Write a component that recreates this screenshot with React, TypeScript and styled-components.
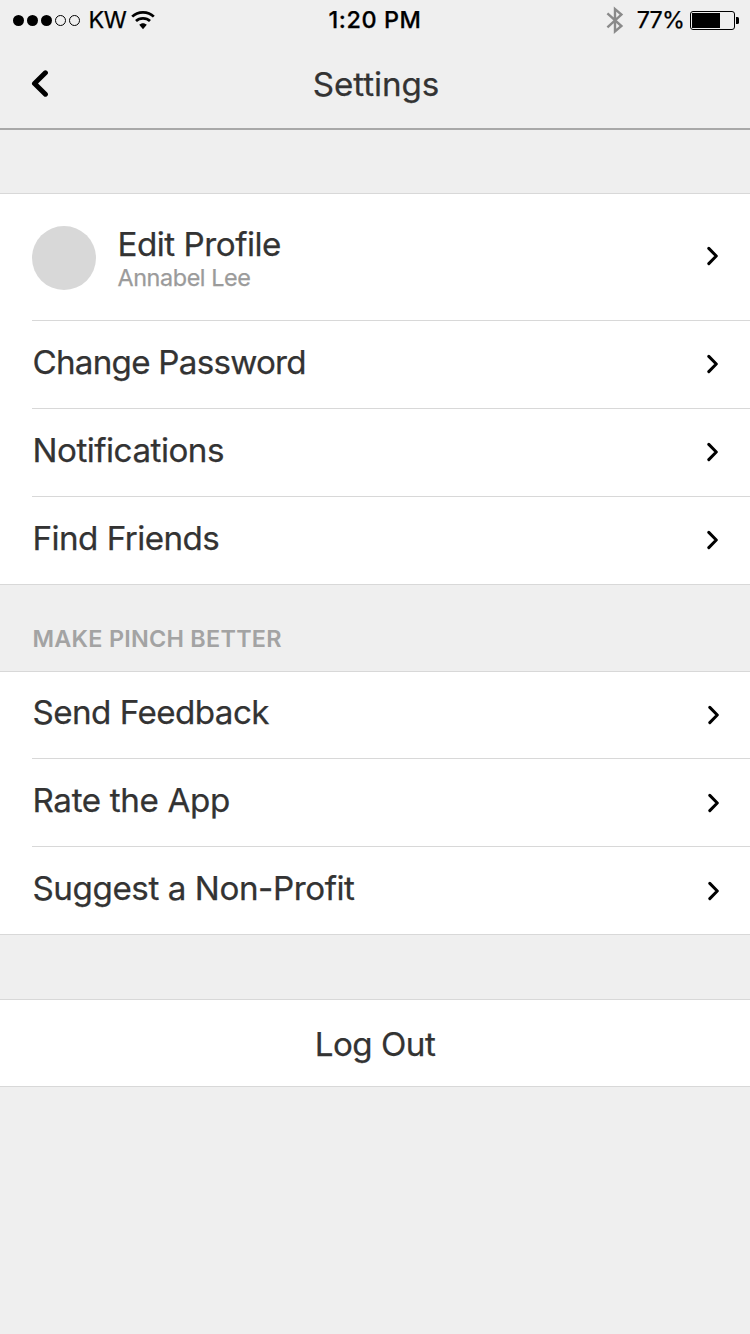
import React from 'react';
import styled, { createGlobalStyle } from 'styled-components';

const GlobalStyle = createGlobalStyle`
  * { box-sizing: border-box; }
  body {
    margin: 0;
    background: #efefef;
    font-family: Inter, 'Liberation Sans', sans-serif;
    color: #333333;
    -webkit-text-stroke: 0.25px currentColor;
  }
`;

const Screen = styled.main`
  display: flex;
  flex-direction: column;
  width: 750px;
  min-height: 1334px;
  background: #efefef;
`;

const StatusBar = styled.div`
  display: grid;
  grid-template-columns: 1fr auto 1fr;
  height: 40px;
  padding: 0 11px 0 13px;
  color: #000;
  font-size: 23.4px;
  line-height: 40px;
  white-space: nowrap;
`;

const StatusSide = styled.div<{ $end?: boolean }>`
  display: flex;
  align-items: center;
  justify-content: ${(p) => (p.$end ? 'flex-end' : 'flex-start')};
`;

const StatusText = styled.span<{ $tracking?: number; $weight?: number }>`
  font-weight: ${(p) => p.$weight ?? 400};
  letter-spacing: ${(p) => p.$tracking ?? 0}px;
`;

const Carrier = styled(StatusText)`
  margin: 0 5px 0 7.5px;
`;

const Time = styled(StatusText)`
  padding-right: 2px;
`;

const Percent = styled(StatusText)`
  margin: 0 6px 0 12.5px;
`;

const NavBar = styled.header`
  display: grid;
  grid-template-columns: 80px 1fr 80px;
  height: 90px;
  border-bottom: 2px solid #a8a8a8;
`;

const BackButton = styled.button`
  display: flex;
  align-items: flex-start;
  padding: 29px 0 0 31px;
  border: 0;
  background: none;
`;

const Title = styled.h1<{ $tracking: number }>`
  margin: 24px 0 0;
  padding-left: 2px;
  font-size: 33.2px;
  font-weight: 400;
  line-height: 40px;
  text-align: center;
  letter-spacing: ${(p) => p.$tracking}px;
`;

const Group = styled.section<{ $gap?: number }>`
  margin-top: ${(p) => p.$gap ?? 0}px;
  border-top: 1px solid #d8d8d8;
  border-bottom: 1px solid #d8d8d8;
  background: #fff;
`;

const Row = styled.div<{ $height: number }>`
  display: flex;
  align-items: flex-end;
  justify-content: space-between;
  height: ${(p) => p.$height}px;
  margin-left: 32px;
  & + & { border-top: 1px solid #d8d8d8; }
`;

const Label = styled.span<{ $tracking: number }>`
  font-size: 33.2px;
  line-height: 40px;
  white-space: nowrap;
  letter-spacing: ${(p) => p.$tracking}px;
`;

const RowLabel = styled(Label)`
  margin: 0 0 26px 0.5px;
`;

const Profile = styled.div`
  display: flex;
  align-items: center;
  gap: 21.5px;
  margin-bottom: 28px;
`;

const Avatar = styled.div`
  width: 64px;
  height: 64px;
  border-radius: 50%;
  background: #d8d8d8;
`;

const ProfileText = styled.div`
  display: flex;
  flex-direction: column;
`;

const ProfileName = styled.span<{ $tracking: number }>`
  color: #9b9b9b;
  font-size: 23.4px;
  line-height: 28px;
  letter-spacing: ${(p) => p.$tracking}px;
`;

const ChevronBox = styled.span<{ $bottom: number; $right: number }>`
  display: flex;
  margin: 0 ${(p) => p.$right}px ${(p) => p.$bottom}px 0;
`;

const SectionTitle = styled.h2<{ $tracking: number }>`
  height: 86px;
  margin: 0;
  padding: 40px 0 0 32.5px;
  color: #a3a3a3;
  font-size: 23.4px;
  font-weight: 600;
  line-height: 28px;
  letter-spacing: ${(p) => p.$tracking}px;
  -webkit-text-stroke: 0;
`;

const LogOut = styled.button`
  display: block;
  width: 100%;
  height: 86px;
  padding: 2px 0 0;
  border: 0;
  background: none;
  color: inherit;
  font-family: inherit;
`;

const Chevron = ({ bottom = 34, right = 31 }: { bottom?: number; right?: number }) => (
  <ChevronBox $bottom={bottom} $right={right}>
    <svg width="12" height="20" viewBox="0 0 12 20" fill="none" stroke="#000" strokeWidth="3" strokeLinecap="round" strokeLinejoin="round">
      <path d="M1.8 2.4 9.3 10 1.8 17.6" />
    </svg>
  </ChevronBox>
);

const Signal = () => (
  <svg width="68" height="12" viewBox="0 0 68 12">
    {[0, 1, 2].map((i) => <circle key={i} cx={5.5 + i * 14} cy="6.5" r="5.5" />)}
    {[3, 4].map((i) => <circle key={i} cx={5.5 + i * 14} cy="6.5" r="5" fill="none" stroke="#000" />)}
  </svg>
);

const Wifi = () => (
  <svg width="24" height="20" viewBox="0 0 24 20" fill="none" stroke="#000" strokeWidth="2.7">
    <path d="M1.2 6.6C6.8 .9 17.2 .9 22.8 6.6M5 11C8.7 7.4 15.3 7.4 19 11" />
    <path d="M8.2 14.7C10.3 12.6 13.7 12.6 15.8 14.7L12 19.2Z" fill="#000" stroke="none" />
  </svg>
);

const Bluetooth = () => (
  <svg width="18" height="28" viewBox="0 0 18 28" fill="none" stroke="#8a8a8a" strokeWidth="2.4">
    <path d="M1.4 7.4 15.4 20 9 25.4V3.2L15.4 8.6 1.4 21.4" />
  </svg>
);

const Battery = () => (
  <svg width="49" height="20" viewBox="0 0 49 20">
    <rect x=".5" y="1.5" width="44" height="18" rx="2.5" fill="none" stroke="#000" />
    <rect x="2" y="3" width="28" height="15" />
    <path d="M46 7h1.5q1.5 0 1.5 1.5v4q0 1.5-1.5 1.5H46z" />
  </svg>
);

const accountRows = [
  { label: 'Change Password', tracking: -0.76 },
  { label: 'Notifications', tracking: -0.5 },
  { label: 'Find Friends', tracking: -0.55 },
];

const feedbackRows = [
  { label: 'Send Feedback', tracking: -0.55 },
  { label: 'Rate the App', tracking: -0.35 },
  { label: 'Suggest a Non-Profit', tracking: -0.43 },
];

export default function App() {
  return (
    <>
      <GlobalStyle />
      <Screen>
        <StatusBar>
          <StatusSide>
            <Signal />
            <Carrier $tracking={-0.4}>KW</Carrier>
            <Wifi />
          </StatusSide>
          <Time $weight={500} $tracking={0.55}>1:20 PM</Time>
          <StatusSide $end>
            <Bluetooth />
            <Percent $tracking={-0.9}>77%</Percent>
            <Battery />
          </StatusSide>
        </StatusBar>
        <NavBar>
          <BackButton aria-label="Back">
            <svg width="18" height="30" viewBox="0 0 18 30" fill="none" stroke="#000" strokeWidth="5" strokeLinecap="round" strokeLinejoin="round">
              <path d="M14.4 3.8 3.5 14.5 14.4 25.2" />
            </svg>
          </BackButton>
          <Title $tracking={-0.08}>Settings</Title>
        </NavBar>

        <Group $gap={63}>
          <Row $height={126}>
            <Profile>
              <Avatar />
              <ProfileText>
                <Label $tracking={-0.48}>Edit Profile</Label>
                <ProfileName $tracking={-0.42}>Annabel Lee</ProfileName>
              </ProfileText>
            </Profile>
            <Chevron bottom={54} />
          </Row>
          {accountRows.map((row) => (
            <Row key={row.label} $height={88}>
              <RowLabel $tracking={row.tracking}>{row.label}</RowLabel>
              <Chevron />
            </Row>
          ))}
        </Group>

        <SectionTitle $tracking={0.26}>MAKE PINCH BETTER</SectionTitle>

        <Group>
          {feedbackRows.map((row, i) => (
            <Row key={row.label} $height={i === 0 ? 86 : 88}>
              <RowLabel $tracking={row.tracking}>{row.label}</RowLabel>
              <Chevron bottom={33} right={30} />
            </Row>
          ))}
        </Group>

        <Group $gap={64}>
          <LogOut>
            <Label $tracking={-0.5}>Log Out</Label>
          </LogOut>
        </Group>
      </Screen>
    </>
  );
}
